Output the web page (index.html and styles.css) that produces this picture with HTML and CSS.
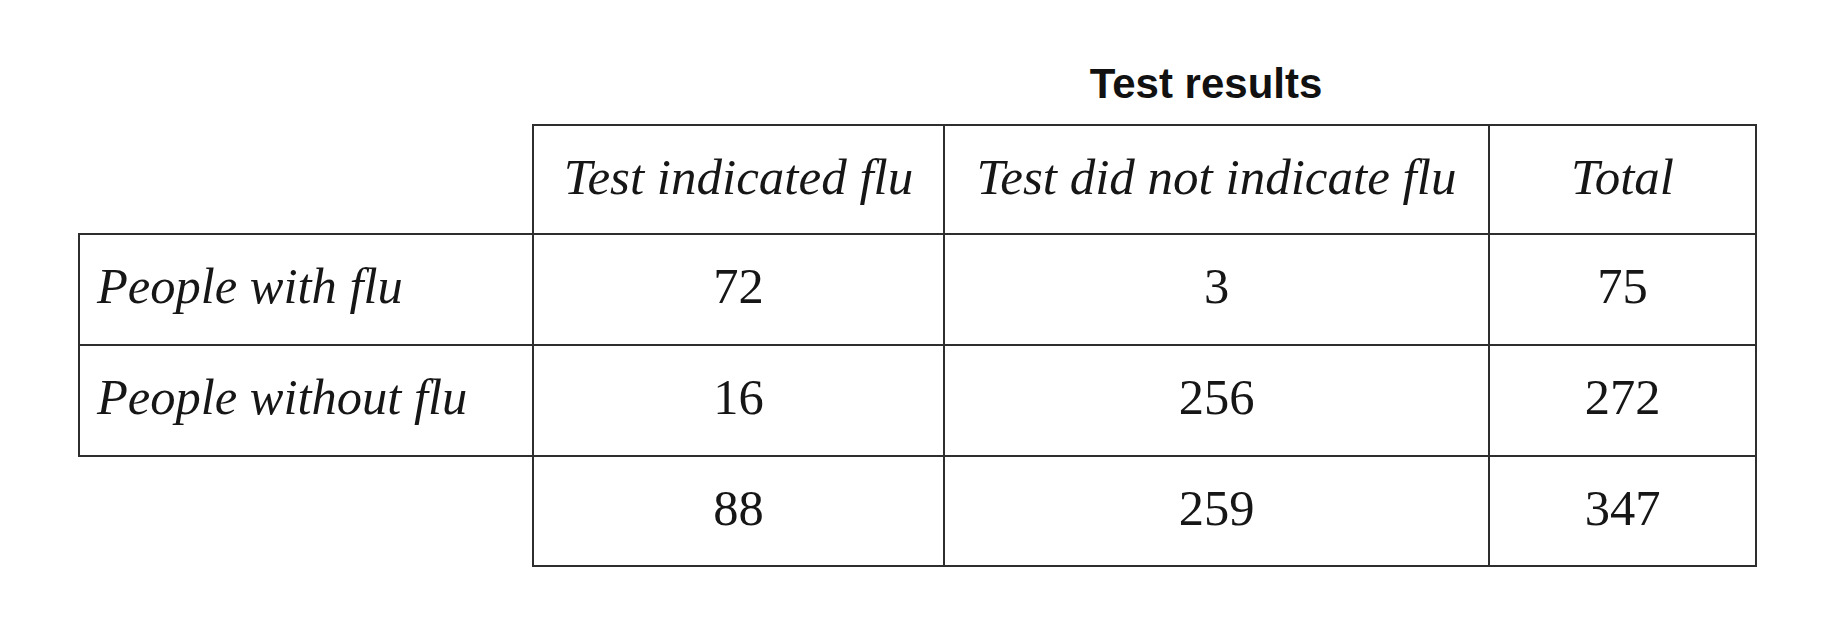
FILE: index.html
```html
<!DOCTYPE html>
<html>
<head>
<meta charset="utf-8">
<link rel="stylesheet" href="styles.css">
</head>
<body>
<div class="page">
  <table class="grid">
    <colgroup>
      <col class="c1">
      <col class="c2">
      <col class="c3">
      <col class="c4">
    </colgroup>
    <tr class="title-row">
      <td></td>
      <td></td>
      <td class="title">Test results</td>
      <td></td>
    </tr>
    <tr class="head-row">
      <td class="corner-top"></td>
      <td class="head">Test indicated flu</td>
      <td class="head">Test did not indicate flu</td>
      <td class="head">Total</td>
    </tr>
    <tr>
      <td class="label">People with flu</td>
      <td class="num">72</td>
      <td class="num">3</td>
      <td class="num">75</td>
    </tr>
    <tr>
      <td class="label">People without flu</td>
      <td class="num">16</td>
      <td class="num">256</td>
      <td class="num">272</td>
    </tr>
    <tr class="last-row">
      <td class="corner-bottom"></td>
      <td class="num">88</td>
      <td class="num">259</td>
      <td class="num">347</td>
    </tr>
  </table>
</div>
</body>
</html>
```

FILE: styles.css
```css
html, body {
  margin: 0;
  padding: 0;
  background: #ffffff;
}

.page {
  padding: 61px 0 0 78px;
}

.grid {
  border-collapse: collapse;
  table-layout: fixed;
  font-family: "Liberation Serif", "Times New Roman", serif;
  color: #161616;
}

.c1 { width: 454px; }
.c2 { width: 411px; }
.c3 { width: 545px; }
.c4 { width: 267px; }

.grid td {
  border: 2px solid #2e2e2e;
  height: 111px;
  padding: 22px 0 0 0;
  vertical-align: top;
  text-align: center;
  font-size: 50.5px;
  line-height: normal;
  box-sizing: border-box;
}

.grid .head-row td {
  height: 109px;
}

.grid .last-row td {
  height: 110px;
}

.grid .title-row td {
  border: none;
  height: auto;
  padding: 0 0 17px 0;
  font-family: "Liberation Sans", Arial, sans-serif;
  font-weight: bold;
  font-size: 42px;
  line-height: 46px;
  color: #111;
}

.grid .title-row td.title {
  padding-right: 21px;
}

.grid td.head,
.grid td.label {
  font-style: italic;
}

.grid td.head {
  font-size: 51px;
}

.grid td.label {
  text-align: left;
  padding-left: 17px;
}

.grid td.corner-top {
  border-top: none;
  border-left: none;
}

.grid td.corner-bottom {
  border-bottom: none;
  border-left: none;
}
```
